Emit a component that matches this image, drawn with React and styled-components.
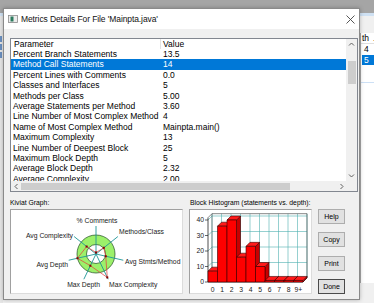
import React from 'react';
import styled, { createGlobalStyle } from 'styled-components';

const Global = createGlobalStyle`
  html, body { margin: 0; padding: 0; }
  body { font-family: "Liberation Sans", Arial, sans-serif; background: #f0f0f0; }
  * { box-sizing: border-box; }
`;

const Desktop = styled.div`
  position: relative;
  width: 374px;
  height: 303px;
  overflow: hidden;
`;

/* ---------- background window ---------- */
const BackWindow = styled.div`
  display: flex;
  flex-direction: column;
  width: 100%;
  height: 100%;
`;
const TopBand = styled.div`
  height: 13px;
  background: #a5a5a5;
`;
const AccentLine = styled.div`
  height: 3px;
  background: #cfe1f3;
`;
const BackBody = styled.div`
  flex: 1;
  display: flex;
  background: #f0f0f0;
`;
const LeftStrip = styled.div`
  width: 3px;
  padding-top: 20px;
  display: flex;
  flex-direction: column;
  gap: 2px;
  overflow: hidden;
  background: #e6e6e6;
`;
const StripMark = styled.div`
  width: 2px;
  height: 6px;
  background: #6a8fc0;
`;
const BackFill = styled.div`
  flex: 1;
`;
const RightStrip = styled.div`
  width: 14px;
  padding-top: 17px;
  display: flex;
  flex-direction: column;
`;
const BackList = styled.div`
  height: 250px;
  background: #fff;
  border-left: 1px solid #a8a8a8;
  font-size: 8.5px;
  display: flex;
  flex-direction: column;
`;
const BackHeader = styled.div`
  height: 11px;
  line-height: 11px;
  padding-left: 1px;
  border-bottom: 1px solid #e0e0e0;
  display: flex;
  gap: 2px;
  color: #000;
`;
const BackSep = styled.span`
  width: 1px;
  background: #d0d0d0;
`;
const BackRow = styled.div`
  height: 10.5px;
  line-height: 10.5px;
  padding-left: 2px;
  margin-left: 1px;
  background: ${p => (p.$selected ? '#0078d7' : 'transparent')};
  color: ${p => (p.$selected ? '#fff' : '#000')};
`;
const BackRule = styled.div`
  margin-top: 17px;
  height: 1px;
  background: #cde0f5;
`;

/* ---------- dialog ---------- */
const Dialog = styled.div`
  position: absolute;
  left: 3px;
  top: 8px;
  width: 357px;
  height: 292px;
  border: 1px solid #8a8a8a;
  background: #f0f0f0;
  display: flex;
  flex-direction: column;
  box-shadow: 0 0 4px rgba(0, 0, 0, 0.25);
`;
const TitleBar = styled.div`
  height: 20px;
  background: #fff;
  display: flex;
  align-items: center;
  padding-left: 4px;
`;
const TitleText = styled.span`
  margin-left: 3px;
  font-size: 8.5px;
  letter-spacing: -0.1px;
  color: #111;
  flex: 1;
  white-space: nowrap;
`;
const CloseButton = styled.div`
  width: 18px;
  height: 20px;
  display: flex;
  align-items: center;
  justify-content: center;
`;
const Body = styled.div`
  flex: 1;
  display: flex;
  flex-direction: column;
  padding: 9px 1px 0 6px;
`;

/* list view */
const ListView = styled.div`
  width: 348px;
  height: 154px;
  border: 1px solid #828790;
  background: #fff;
  display: grid;
  grid-template-columns: 1fr 11px;
  grid-template-rows: 1fr 10px;
`;
const Viewport = styled.div`
  overflow: hidden;
  font-size: 8.5px;
  color: #000;
`;
const HeaderRow = styled.div`
  display: flex;
  height: 10px;
  line-height: 10px;
`;
const HeaderCell = styled.div`
  width: ${p => p.$w}px;
  flex: ${p => (p.$grow ? 1 : 'none')};
  padding-left: ${p => p.$pad}px;
  border-right: ${p => (p.$grow ? 'none' : '1px solid #e3e3e3')};
  white-space: nowrap;
`;
const Row = styled.div`
  display: flex;
  height: 10.4px;
  line-height: 10.4px;
  background: ${p => (p.$selected ? '#0078d7' : 'transparent')};
  color: ${p => (p.$selected ? '#fff' : '#000')};
`;
const Cell = styled.div`
  width: ${p => p.$w}px;
  flex: ${p => (p.$grow ? 1 : 'none')};
  padding-left: ${p => p.$pad}px;
  white-space: nowrap;
  overflow: hidden;
`;
const VScroll = styled.div`
  background: #f0f0f0;
  display: flex;
  flex-direction: column;
  align-items: center;
`;
const HScroll = styled.div`
  background: #f0f0f0;
  display: flex;
  align-items: center;
`;
const ArrowBox = styled.div`
  width: ${p => (p.$horizontal ? '10px' : '11px')};
  height: ${p => (p.$horizontal ? '10px' : '11px')};
  display: flex;
  align-items: center;
  justify-content: center;
  flex: none;
`;
const VThumb = styled.div`
  width: 8px;
  height: 23px;
  margin-top: 11px;
  background: #cdcdcd;
`;
const HThumb = styled.div`
  width: 269px;
  height: 7px;
  background: #cdcdcd;
`;
const Spacer = styled.div`
  flex: 1;
`;
const Corner = styled.div`
  background: #f0f0f0;
`;

/* lower part */
const Lower = styled.div`
  display: grid;
  grid-template-columns: 173px 123px 27px;
  grid-template-rows: 17px 85px;
  column-gap: 6px;
`;
const SectionLabel = styled.div`
  font-size: 6.8px;
  color: #000;
  align-self: end;
  padding-bottom: 3px;
  padding-left: ${p => p.$pad || 0}px;
  white-space: nowrap;
`;
const ChartBox = styled.div`
  grid-row: 2;
  background: #fff;
  border: 1px solid;
  border-color: #a0a0a0 #dcdcdc #dcdcdc #a0a0a0;
  display: flex;
`;
const ButtonColumn = styled.div`
  grid-row: 2;
  grid-column: 3;
  display: flex;
  flex-direction: column;
  justify-content: space-between;
`;
const Button = styled.div`
  height: 15px;
  background: #e1e1e1;
  border: 1px solid ${p => (p.$default ? '#4a4a4a' : '#adadad')};
  font-size: 7px;
  color: #000;
  display: flex;
  align-items: center;
  justify-content: center;
`;

/* ---------- drawings ---------- */
const AppIcon = () => (
  <svg width="10" height="8" viewBox="0 0 10 8">
    <rect x="0.5" y="0.5" width="9" height="7" fill="#ececec" stroke="#8c8c8c" strokeWidth="0.8" />
    <rect x="2.5" y="1.5" width="3" height="5" fill="#2c7a5e" />
  </svg>
);

const CloseIcon = () => (
  <svg width="9" height="9" viewBox="0 0 9 9">
    <path d="M0.5 0.5 L8.5 8.5 M8.5 0.5 L0.5 8.5" stroke="#444" strokeWidth="0.9" />
  </svg>
);

const Chevron = ({ dir }) => {
  const d = {
    up: 'M1 4.5 L3.5 2 L6 4.5',
    down: 'M1 2.5 L3.5 5 L6 2.5',
    left: 'M4.5 1 L2 3.5 L4.5 6',
    right: 'M2.5 1 L5 3.5 L2.5 6',
  }[dir];
  return (
    <svg width="7" height="7" viewBox="0 0 7 7">
      <path d={d} fill="none" stroke="#606060" strokeWidth="1" />
    </svg>
  );
};

const kivLabels = [
  { t: '% Comments', x: 87, y: 14, a: 'middle' },
  { t: 'Methods/Class', x: 109, y: 25, a: 'start' },
  { t: 'Avg Stmts/Method', x: 115, y: 55, a: 'start' },
  { t: 'Max Complexity', x: 99, y: 78, a: 'start' },
  { t: 'Max Depth', x: 90, y: 78, a: 'end' },
  { t: 'Avg Depth', x: 58, y: 58, a: 'end' },
  { t: 'Avg Complexity', x: 63, y: 29, a: 'end' },
];
const kivValues = [1.5, 10, 10, 26, 13, 19, 12];

const Kiviat = () => {
  const cx = 86;
  const cy = 45;
  const len = 28;
  const ang = k => ((-90 + (k * 360) / 7) * Math.PI) / 180;
  const pts = kivValues.map((v, k) => [cx + v * Math.cos(ang(k)), cy + v * Math.sin(ang(k))]);
  return (
    <svg width="171" height="83" viewBox="1 1 171 83">
      <circle cx={cx} cy={cy} r="19" fill="#9cf06a" stroke="#1f4a22" strokeWidth="0.7" />
      <circle cx={cx} cy={cy} r="9.5" fill="#fff" stroke="#1f4a22" strokeWidth="0.7" />
      {kivValues.map((_, k) => (
        <line
          key={k}
          x1={cx}
          y1={cy}
          x2={cx + len * Math.cos(ang(k))}
          y2={cy + len * Math.sin(ang(k))}
          stroke="#1d9595"
          strokeWidth="0.9"
        />
      ))}
      <polygon points={pts.map(p => p.join(',')).join(' ')} fill="none" stroke="#e23a3a" strokeWidth="0.7" />
      {pts.map((p, k) => (
        <rect key={k} x={p[0] - 1} y={p[1] - 1} width="2" height="2" fill="#8a0000" />
      ))}
      {kivLabels.map(l => (
        <text
          key={l.t}
          x={l.x}
          y={l.y}
          textAnchor={l.a}
          fontFamily="Liberation Sans, Arial, sans-serif"
          fontSize="6.8"
          fill="#1a1a1a"
        >
          {l.t}
        </text>
      ))}
    </svg>
  );
};

const histValues = [7, 36, 40, 16, 23, 10, 1, 1, 1, 1];
const histLabels = ['0', '1', '2', '3', '4', '5', '6', '7', '8', '9+'];

const Histogram = () => {
  const X0 = 19;
  const Y0 = 73;
  const CW = 9.5;
  const SC = 1.55;
  const DX = 4;
  const DY = -4;
  const W = CW * 10;
  const top = Y0 - 41.5 * SC;
  const ticks = [0, 10, 20, 30, 40];
  const font = 'Liberation Sans, Arial, sans-serif';
  return (
    <svg width="121" height="83" viewBox="1 1 121 83">
      {/* back wall grid */}
      {ticks.map(v => (
        <line key={'h' + v} x1={X0 + DX} y1={Y0 + DY - v * SC} x2={X0 + DX + W} y2={Y0 + DY - v * SC} stroke="#4fb0b0" strokeWidth="0.6" />
      ))}
      {Array.from({ length: 11 }, (_, i) => (
        <line key={'v' + i} x1={X0 + DX + i * CW} y1={top + DY} x2={X0 + DX + i * CW} y2={Y0 + DY} stroke="#4fb0b0" strokeWidth="0.6" />
      ))}
      {/* left wall diagonals */}
      {ticks.map(v => (
        <line key={'d' + v} x1={X0} y1={Y0 - v * SC} x2={X0 + DX} y2={Y0 + DY - v * SC} stroke="#4fb0b0" strokeWidth="0.6" />
      ))}
      {/* floor diagonals */}
      {Array.from({ length: 11 }, (_, i) => (
        <line key={'f' + i} x1={X0 + i * CW} y1={Y0} x2={X0 + DX + i * CW} y2={Y0 + DY} stroke="#4fb0b0" strokeWidth="0.6" />
      ))}
      {/* frame */}
      <polyline
        points={`${X0},${top} ${X0 + DX},${top + DY} ${X0 + DX + W},${top + DY} ${X0 + DX + W},${Y0 + DY} ${X0 + W},${Y0}`}
        fill="none"
        stroke="#555"
        strokeWidth="0.7"
      />
      <line x1={X0 + DX} y1={top + DY} x2={X0 + DX} y2={Y0 + DY} stroke="#555" strokeWidth="0.6" />
      <polyline points={`${X0},${top} ${X0},${Y0} ${X0 + W},${Y0}`} fill="none" stroke="#222" strokeWidth="0.8" />
      {ticks.map(v => (
        <g key={'t' + v}>
          <line x1={X0 - 3} y1={Y0 - v * SC} x2={X0} y2={Y0 - v * SC} stroke="#222" strokeWidth="0.7" />
          <text x={X0 - 4} y={Y0 - v * SC + 2.4} textAnchor="end" fontFamily={font} fontSize="6.8" fill="#1a1a1a">
            {v}
          </text>
        </g>
      ))}
      {/* bars */}
      {histValues.map((v, i) => {
        const x = X0 + i * CW;
        const yt = Y0 - v * SC;
        return (
          <g key={'b' + i} stroke="#3a0000" strokeWidth="0.6" strokeLinejoin="round">
            <polygon points={`${x + CW},${yt} ${x + CW + DX},${yt + DY} ${x + CW + DX},${Y0 + DY} ${x + CW},${Y0}`} fill="#c80000" />
            <polygon points={`${x},${yt} ${x + DX},${yt + DY} ${x + CW + DX},${yt + DY} ${x + CW},${yt}`} fill="#ff1a1a" />
            <rect x={x} y={yt} width={CW} height={v * SC} fill="#ff0000" />
          </g>
        );
      })}
      {histLabels.map((l, i) => (
        <text key={'x' + l} x={X0 + i * CW + CW / 2} y={83} textAnchor="middle" fontFamily={font} fontSize="6.8" fill="#1a1a1a">
          {l}
        </text>
      ))}
    </svg>
  );
};

/* ---------- data ---------- */
const rows = [
  ['Percent Branch Statements', '13.5'],
  ['Method Call Statements', '14'],
  ['Percent Lines with Comments', '0.0'],
  ['Classes and Interfaces', '5'],
  ['Methods per Class', '5.00'],
  ['Average Statements per Method', '3.60'],
  ['Line Number of Most Complex Method', '4'],
  ['Name of Most Complex Method', 'Mainpta.main()'],
  ['Maximum Complexity', '13'],
  ['Line Number of Deepest Block', '25'],
  ['Maximum Block Depth', '5'],
  ['Average Block Depth', '2.32'],
  ['Average Complexity', '2.00'],
];

export default function App() {
  return (
    <>
      <Global />
      <Desktop>
        <BackWindow>
          <TopBand />
          <AccentLine />
          <BackBody>
            <LeftStrip>
              <StripMark />
              <StripMark />
              <StripMark />
            </LeftStrip>
            <BackFill />
            <RightStrip>
              <BackList>
                <BackHeader>
                  <span>th</span>
                  <BackSep />
                  <span>.</span>
                </BackHeader>
                <BackRow>4</BackRow>
                <BackRow $selected>5</BackRow>
                <BackRule />
              </BackList>
            </RightStrip>
          </BackBody>
        </BackWindow>

        <Dialog>
          <TitleBar>
            <AppIcon />
            <TitleText>Metrics Details For File 'Mainpta.java'</TitleText>
            <CloseButton>
              <CloseIcon />
            </CloseButton>
          </TitleBar>
          <Body>
            <ListView>
              <Viewport>
                <HeaderRow>
                  <HeaderCell $w={150} $pad={3}>Parameter</HeaderCell>
                  <HeaderCell $grow $pad={2}>Value</HeaderCell>
                </HeaderRow>
                {rows.map(([p, v], i) => (
                  <Row key={p} $selected={i === 1}>
                    <Cell $w={150} $pad={2}>{p}</Cell>
                    <Cell $grow $pad={2}>{v}</Cell>
                  </Row>
                ))}
              </Viewport>
              <VScroll>
                <ArrowBox>
                  <Chevron dir="up" />
                </ArrowBox>
                <VThumb />
                <Spacer />
                <ArrowBox>
                  <Chevron dir="down" />
                </ArrowBox>
              </VScroll>
              <HScroll>
                <ArrowBox $horizontal>
                  <Chevron dir="left" />
                </ArrowBox>
                <HThumb />
                <Spacer />
                <ArrowBox $horizontal>
                  <Chevron dir="right" />
                </ArrowBox>
              </HScroll>
              <Corner />
            </ListView>

            <Lower>
              <SectionLabel>Kiviat Graph:</SectionLabel>
              <SectionLabel $pad={1}>Block Histogram (statements vs. depth):</SectionLabel>
              <ChartBox>
                <Kiviat />
              </ChartBox>
              <ChartBox>
                <Histogram />
              </ChartBox>
              <ButtonColumn>
                <Button>Help</Button>
                <Button>Copy</Button>
                <Button>Print</Button>
                <Button $default>Done</Button>
              </ButtonColumn>
            </Lower>
          </Body>
        </Dialog>
      </Desktop>
    </>
  );
}
